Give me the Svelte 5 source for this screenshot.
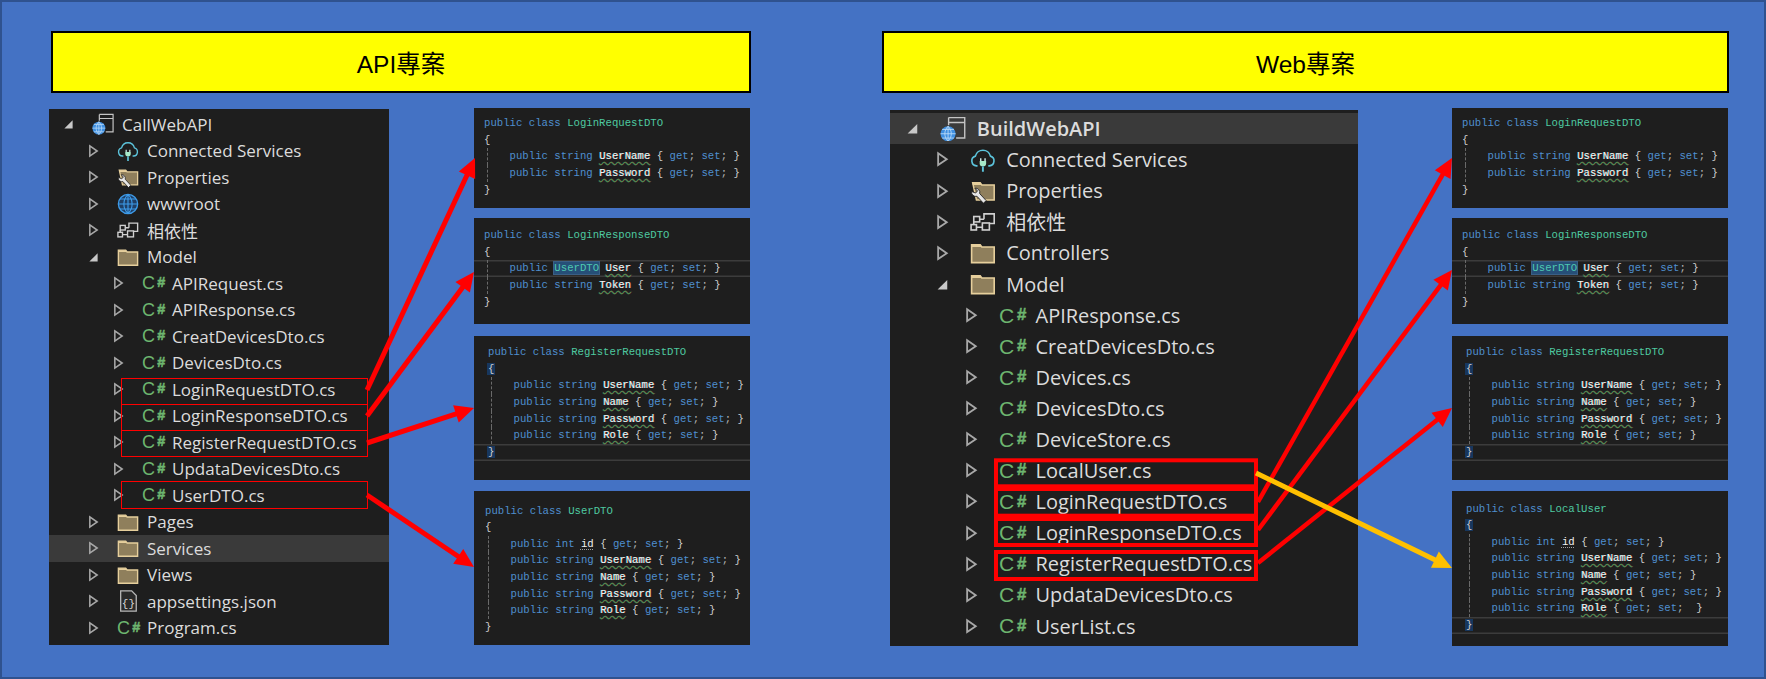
<script>
  const leftTree = [
    { level: 0, icon: 'project', text: 'CallWebAPI', open: true },
    { level: 1, icon: 'cloud', text: 'Connected Services' },
    { level: 1, icon: 'props', text: 'Properties' },
    { level: 1, icon: 'globe', text: 'wwwroot' },
    { level: 1, icon: 'deps', text: '相依性' },
    { level: 1, icon: 'folder', text: 'Model', open: true },
    { level: 2, icon: 'cs', text: 'APIRequest.cs' },
    { level: 2, icon: 'cs', text: 'APIResponse.cs' },
    { level: 2, icon: 'cs', text: 'CreatDevicesDto.cs' },
    { level: 2, icon: 'cs', text: 'DevicesDto.cs' },
    { level: 2, icon: 'cs', text: 'LoginRequestDTO.cs' },
    { level: 2, icon: 'cs', text: 'LoginResponseDTO.cs' },
    { level: 2, icon: 'cs', text: 'RegisterRequestDTO.cs' },
    { level: 2, icon: 'cs', text: 'UpdataDevicesDto.cs' },
    { level: 2, icon: 'cs', text: 'UserDTO.cs' },
    { level: 1, icon: 'folder', text: 'Pages' },
    { level: 1, icon: 'folder', text: 'Services', active: true },
    { level: 1, icon: 'folder', text: 'Views' },
    { level: 1, icon: 'json', text: 'appsettings.json' },
    { level: 1, icon: 'cs', text: 'Program.cs' }
  ];

  const rightTree = [
    { level: 0, icon: 'project', text: 'BuildWebAPI', open: true, active: true, bold: true },
    { level: 1, icon: 'cloud', text: 'Connected Services' },
    { level: 1, icon: 'props', text: 'Properties' },
    { level: 1, icon: 'deps', text: '相依性' },
    { level: 1, icon: 'folder', text: 'Controllers' },
    { level: 1, icon: 'folder', text: 'Model', open: true },
    { level: 2, icon: 'cs', text: 'APIResponse.cs' },
    { level: 2, icon: 'cs', text: 'CreatDevicesDto.cs' },
    { level: 2, icon: 'cs', text: 'Devices.cs' },
    { level: 2, icon: 'cs', text: 'DevicesDto.cs' },
    { level: 2, icon: 'cs', text: 'DeviceStore.cs' },
    { level: 2, icon: 'cs', text: 'LocalUser.cs' },
    { level: 2, icon: 'cs', text: 'LoginRequestDTO.cs' },
    { level: 2, icon: 'cs', text: 'LoginResponseDTO.cs' },
    { level: 2, icon: 'cs', text: 'RegisterRequestDTO.cs' },
    { level: 2, icon: 'cs', text: 'UpdataDevicesDto.cs' },
    { level: 2, icon: 'cs', text: 'UserList.cs' }
  ];

  const loginRequest = {
    name: 'LoginRequestDTO', x: 10, y: 7, h: 100,
    props: [['string', 'UserName'], ['string', 'Password']]
  };
  const loginResponse = {
    name: 'LoginResponseDTO', x: 10, y: 9, h: 106,
    props: [['UserDTO', 'User', 'current'], ['string', 'Token']]
  };
  const registerRequest = {
    name: 'RegisterRequestDTO', x: 14, y: 8, h: 144, closing: true,
    props: [['string', 'UserName'], ['string', 'Name'], ['string', 'Password'], ['string', 'Role']]
  };
  const userDto = {
    name: 'UserDTO', x: 11, y: 11.500, h: 154,
    props: [['int', 'id'], ['string', 'UserName'], ['string', 'Name'], ['string', 'Password'], ['string', 'Role']]
  };
  const localUser = {
    name: 'LocalUser', x: 14, y: 9.500, h: 155, closing: true, wideLast: true,
    props: [['int', 'id'], ['string', 'UserName'], ['string', 'Name'], ['string', 'Password'], ['string', 'Role']]
  };

  const leftBoxes = [
    { x: 121.5, y: 378.5, w: 246, h: 26 },
    { x: 121.5, y: 404.5, w: 246, h: 26 },
    { x: 121.5, y: 430.5, w: 246, h: 26 },
    { x: 121.5, y: 481.5, w: 246, h: 27 }
  ];
  const rightBoxes = [
    { x: 996, y: 460.3, w: 260, h: 26 },
    { x: 996, y: 489, w: 260, h: 26.7 },
    { x: 996, y: 519, w: 260, h: 26 },
    { x: 996, y: 552, w: 260, h: 27 }
  ];

  const arrows = [
    { from: [367, 390], to: [475, 158], color: '#ff0000', width: 5 },
    { from: [367, 416], to: [474, 272], color: '#ff0000', width: 5 },
    { from: [367, 443], to: [474, 408], color: '#ff0000', width: 5 },
    { from: [367, 495], to: [474, 567], color: '#ff0000', width: 5 },
    { from: [1258, 502], to: [1452, 158], color: '#ff0000', width: 4.5 },
    { from: [1258, 530], to: [1452, 270], color: '#ff0000', width: 4.5 },
    { from: [1258, 563], to: [1452, 408], color: '#ff0000', width: 4.5 },
    { from: [1256, 473], to: [1452, 568], color: '#ffc000', width: 5 }
  ];

  // shaft stops at the base of the head, head is a plain triangle
  function arrowParts(a) {
    const dx = a.to[0] - a.from[0];
    const dy = a.to[1] - a.from[1];
    const len = Math.hypot(dx, dy);
    const ux = dx / len;
    const uy = dy / len;
    const bx = a.to[0] - ux * 19;
    const by = a.to[1] - uy * 19;
    const points = [
      `${a.to[0]},${a.to[1]}`,
      `${bx - uy * 9},${by + ux * 9}`,
      `${bx + uy * 9},${by - ux * 9}`
    ].join(' ');
    return { bx: bx + ux, by: by + uy, points };
  }
</script>

{#snippet icon(name)}
  {#if name === 'cs'}
    <span class="cs">C<b>#</b></span>
  {:else if name === 'project'}
    <svg class="ico" viewBox="0 0 24 24">
      <path d="M8 1.5h15v19h-8M8 1.5v7M8 6h15" fill="none" stroke="#c4c4c4" stroke-width="1.3" />
      <circle cx="7.5" cy="16.5" r="7" fill="#3f8fe0" />
      <path d="M.5 16.5h14M7.5 9.5v14M2 12.5h11M2 20.5h11M7.5 9.5c-4 4-4 10 0 14M7.5 9.5c4 4 4 10 0 14" fill="none" stroke="#bcdcf8" stroke-width=".8" />
    </svg>
  {:else if name === 'cloud'}
    <svg class="ico" viewBox="0 0 24 24">
      <path d="M7 17.5H6a4.6 4.6 0 0 1-1-9 7.2 7.2 0 0 1 14 0 4.6 4.6 0 0 1-1 9h-1" fill="none" stroke="#5cc4dc" stroke-width="1.5" />
      <path d="M10 10.500v2.500M14 10.500v2.500" stroke="#dff" stroke-width="1.2" />
      <path d="M9 13h6v2a3 3 0 0 1-6 0z" fill="#a6e8c8" />
      <path d="M12 18v5" stroke="#5cc4dc" stroke-width="1.800" />
    </svg>
  {:else if name === 'props'}
    <svg class="ico" viewBox="0 0 24 24">
      <path d="M2.500 4.500h7l1.500 2h11.500v14H6z" fill="#8f7f5c" stroke="#e6cf9c" stroke-width="1.400" />
      <path d="M2.500 4.500h7l1.500 2H2.500z" fill="#e6cf9c" />
      <path d="M1.500 12.500a4 4 0 0 0 5 4.500l6 6.500 2.500-2.500-6-6.500a4 4 0 0 0-4.500-5l2.500 2.500-1.800 2z" fill="#e8e8e8" stroke="#1e1e1e" stroke-width=".8" />
    </svg>
  {:else if name === 'globe'}
    <svg class="ico" viewBox="0 0 24 24">
      <circle cx="12" cy="12" r="10.500" fill="#1f3f66" stroke="#3d9be9" stroke-width="1.500" />
      <path d="M1.500 12h21M12 1.500v21M3.500 6.500h17M3.500 17.500h17M12 1.500c-6 6-6 15 0 21M12 1.500c6 6 6 15 0 21" fill="none" stroke="#3d9be9" stroke-width="1.200" />
    </svg>
  {:else if name === 'deps'}
    <svg class="ico" viewBox="0 0 24 24" fill="none" stroke="#d0d0d0" stroke-width="1.500">
      <rect x="1" y="14.500" width="5" height="5" />
      <rect x="3.500" y="7" width="5.500" height="5" />
      <rect x="11.500" y="13" width="6.500" height="6.500" />
      <path d="M13 9.500V4.500h9.500v9H18M9 9.500h4M3.500 14.500V12M6 17h5.500" />
    </svg>
  {:else if name === 'json'}
    <svg class="ico" viewBox="0 0 24 24">
      <path d="M4 1h12l5 5v17H4z" fill="#2a2a2a" stroke="#b8b8b8" stroke-width="1.400" />
      <text x="12.500" y="18" text-anchor="middle" font-size="12" font-family="Liberation Mono, monospace" fill="#d8d8d8">{'{}'}</text>
    </svg>
  {:else}
    <svg class="ico" viewBox="0 0 24 24">
      <path d="M1.500 4.500h8l1.500 2h11.500v14.500h-21z" fill="#8f7f5c" stroke="#e6cf9c" stroke-width="1.500" />
      <path d="M1.500 4.500h8l1.500 2H1.500z" fill="#e6cf9c" />
    </svg>
  {/if}
{/snippet}

{#snippet tree(rows, large)}
  <div class="tree" class:large>
    {#each rows as row}
      <div class="row lv{row.level}" class:active={row.active}>
        <span class="chev">
          {#if row.open}
            <svg viewBox="0 0 12 14"><path d="M10.500 3v9h-9z" fill="#c8c8c8" /></svg>
          {:else}
            <svg viewBox="0 0 12 14"><path d="M2 1.500 10 7l-8 5.500z" fill="none" stroke="#a8a8a8" stroke-width="1.700" /></svg>
          {/if}
        </span>
        <span class="icon-slot">{@render icon(row.icon)}</span>
        <span class="label" class:bold={row.bold}>{row.text}</span>
      </div>
    {/each}
  </div>
{/snippet}

{#snippet code(p)}
  <div class="code" style="height: {p.h}px; padding-top: {p.y}px; --x: {p.x}px;">
    <div class="line"><span class="txt"><span class="kw">{'public class '}</span><span class="type">{p.name}</span></span></div>
    <div class="line"><span class="txt"><span class="brace" class:match={p.closing}>{'{'}</span></span></div>
    {#each p.props as prop, i}
      <div class="line" class:cur={prop[2] === 'current'}>
        <span class="guide"></span>
        <span class="txt"><span class="kw">{'public '}</span>{#if prop[0] === 'UserDTO'}<span class="selected">UserDTO</span>{:else}<span class="kw">{prop[0]}</span>{/if}{' '}<span class="ident" class:dots={prop[1] === 'id'}>{prop[1]}</span><span class="brace">{' { '}</span><span class="kw">get</span><span class="semi">{'; '}</span><span class="kw">set</span><span class="semi">{p.wideLast && i === p.props.length - 1 ? ';  ' : '; '}</span><span class="brace">{'}'}</span></span>
      </div>
    {/each}
    <div class="line" class:cur={p.closing}><span class="txt"><span class="brace" class:match={p.closing}>{'}'}</span></span></div>
  </div>
{/snippet}

<div class="page">
  <section class="side side-api">
    <h1 class="title">API專案</h1>
    <div class="body">
      {@render tree(leftTree, false)}
      <div class="codes">
        {@render code(loginRequest)}
        {@render code(loginResponse)}
        {@render code(registerRequest)}
        {@render code(userDto)}
      </div>
    </div>
  </section>

  <section class="side side-web">
    <h1 class="title">Web專案</h1>
    <div class="body">
      {@render tree(rightTree, true)}
      <div class="codes">
        {@render code(loginRequest)}
        {@render code(loginResponse)}
        {@render code(registerRequest)}
        {@render code(localUser)}
      </div>
    </div>
  </section>

  <!-- red boxes and arrows drawn over the panels -->
  <svg class="overlay" width="1766" height="679" viewBox="0 0 1766 679">
    {#each leftBoxes as b}
      <rect x={b.x} y={b.y} width={b.w} height={b.h} fill="none" stroke="#ff0000" stroke-width="1" />
    {/each}
    {#each rightBoxes as b}
      <rect x={b.x} y={b.y} width={b.w} height={b.h} fill="none" stroke="#ff0000" stroke-width="4" />
    {/each}
    {#each arrows as a}
      {@const p = arrowParts(a)}
      <line x1={a.from[0]} y1={a.from[1]} x2={p.bx} y2={p.by} stroke={a.color} stroke-width={a.width} />
      <polygon points={p.points} fill={a.color} />
    {/each}
  </svg>
</div>

<style>
  :global(body) {
    margin: 0;
    background: #4472c4;
  }

  .page {
    position: relative;
    box-sizing: border-box;
    width: 1766px;
    height: 679px;
    padding: 31px 0 0 49px;
    display: flex;
    gap: 139px;
    background: #4472c4;
    box-shadow: inset 0 0 0 2px #2f528f;
    overflow: hidden;
  }

  .overlay {
    position: absolute;
    top: 0;
    left: 0;
    pointer-events: none;
  }

  .title {
    box-sizing: border-box;
    height: 62px;
    margin: 0 0 15px;
    display: flex;
    align-items: center;
    justify-content: center;
    background: #ffff00;
    border: 2px solid #000;
    font: 400 24.5px "Liberation Sans", "Noto Sans CJK TC", sans-serif;
    color: #000;
  }

  .side-api .title {
    width: 700px;
    margin-left: 2px;
  }

  .side-web .title {
    width: 847px;
    margin-left: -8px;
  }

  .body {
    display: flex;
    align-items: flex-start;
  }

  .side-api .body {
    gap: 85px;
  }

  .side-web .body {
    gap: 94px;
  }

  .tree {
    box-sizing: border-box;
    width: 340px;
    height: 536px;
    margin-top: 1px;
    padding-top: 2px;
    background: #1e1e1e;
    font: 15px "Open Sans", "Noto Sans CJK TC", sans-serif;
    color: #dcdcdc;
  }

  .tree.large {
    width: 468px;
    margin-top: 2px;
    padding-top: 3px;
    font-size: 17.6px;
  }

  .row {
    height: 1.7667em;
    display: flex;
    align-items: center;
    white-space: nowrap;
  }

  .row.active {
    background: #3a3a3a;
  }

  .lv0 { padding-left: 0.933em; }
  .lv1 { padding-left: 2.6em; }
  .lv2 { padding-left: 4.267em; }

  .chev {
    width: 1.933em;
    flex: none;
    display: flex;
  }

  .chev svg {
    width: 0.733em;
    height: 0.933em;
  }

  .icon-slot {
    width: 2em;
    flex: none;
    display: flex;
    align-items: center;
  }

  .tree.large .icon-slot {
    width: 2.07em;
  }

  .ico {
    width: 1.467em;
    height: 1.467em;
  }

  .label {
    font-size: 1.135em;
  }

  .label.bold {
    font-weight: 600;
  }

  .cs {
    font: 1.2em "Liberation Sans", sans-serif;
    color: #6db56f;
    line-height: 1;
    white-space: nowrap;
  }

  .cs b {
    margin-left: 0.15em;
    font-size: 0.8em;
    vertical-align: 0.15em;
    -webkit-text-stroke: 0.5px #6db56f;
  }

  .codes {
    width: 276px;
    display: flex;
    flex-direction: column;
  }

  .code {
    box-sizing: border-box;
    background: #1e1e1e;
    font: 10.67px/16.67px "Liberation Mono", monospace;
    color: #dcdcdc;
    overflow: hidden;
  }

  .code:nth-child(1) { margin-bottom: 10px; }
  .code:nth-child(2) { margin-bottom: 12px; }
  .code:nth-child(3) { margin-bottom: 11px; }

  .line {
    height: 16.67px;
    padding-left: var(--x);
    display: flex;
  }

  .txt {
    white-space: pre;
  }

  .line.cur {
    box-shadow: inset 0 1.5px #3c3c3c, inset 0 -1.5px #3c3c3c;
  }

  .guide {
    box-sizing: border-box;
    flex: none;
    width: 4ch;
    margin-left: 3px;
    margin-right: -3px;
    border-left: 1px dashed #6a6a6a;
  }

  .kw {
    color: #4f8fcf;
  }

  .type {
    color: #4ec9a0;
  }

  .semi {
    color: #b4b4b4;
  }

  .brace {
    color: #d0d0d0;
  }

  .brace.match {
    background: #17375e;
    padding: 0 1px;
    margin-left: -1px;
  }

  .ident {
    color: #f0f0f0;
    text-shadow: -0.5px 0 rgba(0, 220, 220, 0.6), 0.5px 0 rgba(240, 60, 60, 0.6);
    text-decoration: underline wavy #5a8f3c 1px;
    text-underline-offset: 2px;
  }

  .ident.dots {
    text-shadow: none;
    text-decoration: underline dotted #a0a0a0 1px;
  }

  .selected {
    background: #264f78;
    color: #4ec9b0;
    box-shadow: 0 0 0 1px #3a5f85;
  }
</style>
